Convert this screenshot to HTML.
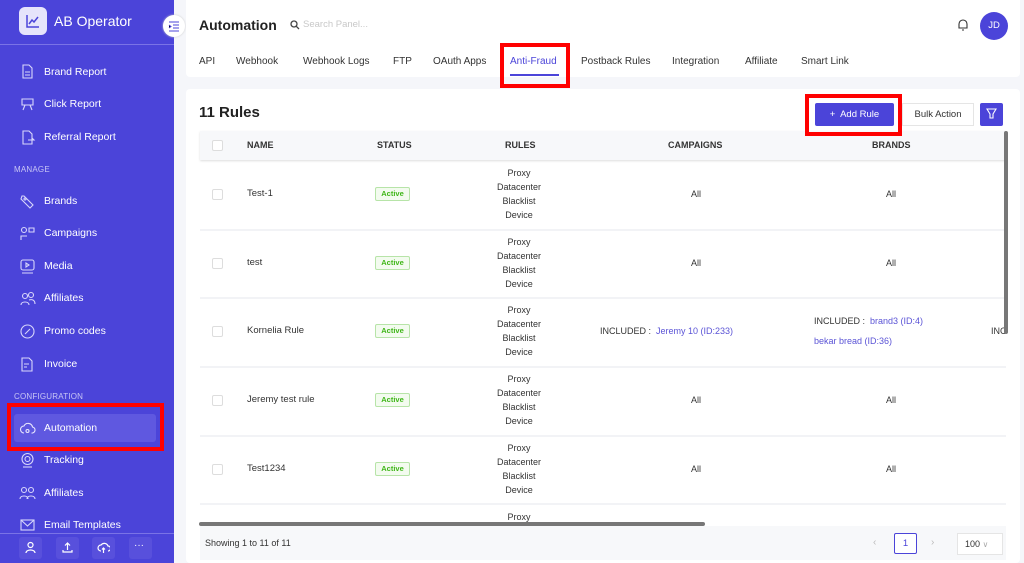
<!DOCTYPE html>
<html><head><meta charset="utf-8"><style>
*{box-sizing:border-box;margin:0;padding:0}
body{width:1024px;height:563px;overflow:hidden;background:#f5f6fa;font-family:"Liberation Sans",sans-serif;position:relative;color:#333}
.a{position:absolute}
#sb{left:0;top:0;width:174px;height:563px;background:#4b44d9;color:#fff}
.it{position:absolute;left:44px;font-size:10.5px;color:#fff}
.ic{position:absolute;left:19px;width:17px;height:17px}
.sec{position:absolute;left:14px;font-size:8px;color:#c9c6f5;letter-spacing:.2px}
.tab{position:absolute;top:56px;font-size:10px;color:#333}
.th{position:absolute;top:140px;font-size:9px;font-weight:bold;color:#333}
.cb{position:absolute;left:212px;width:11px;height:11px;border:1px solid #ddd;border-radius:2px;background:#fff}
.nm{position:absolute;left:247px;font-size:9.5px;color:#333}
.st{position:absolute;left:375px;width:35px;height:14px;border:1px solid #b7e4a8;background:#f3fbef;color:#3fb618;font-size:7.5px;font-weight:bold;text-align:center;line-height:12px;border-radius:2px}
.ru{position:absolute;left:470px;width:98px;text-align:center;font-size:9px;line-height:14px;color:#333}
.al{position:absolute;font-size:9px;color:#333}
.sep{position:absolute;left:200px;width:806px;height:2px;background:#f2f3f6}
.red{position:absolute;border:4px solid #f00}
.lk{color:#5b54d6}
</style></head><body>
<div id="sb" class="a">
 <div class="a" style="left:19px;top:7px;width:28px;height:28px;background:#e6e4fb;border-radius:6px"></div>
 <svg class="a" style="left:25px;top:13px" width="16" height="16" viewBox="0 0 16 16" fill="none" stroke="#4b44d9" stroke-width="1.5"><path d="M2 2v12h12M4 11l3-4 2 2 4-5"/></svg>
 <div class="a" style="left:54px;top:13px;font-size:14px;color:#fff">AB Operator</div>
 <div class="a" style="left:0;top:44px;width:174px;height:1px;background:#7a73e6"></div>
 <svg class="ic" style="top:63px" viewBox="0 0 17 17" fill="none" stroke="#d8d6fb" stroke-width="1.1"><path d="M4 2h6l3 3v10H4z M6 9h5M6 12h5"/></svg><div class="it" style="top:66px">Brand Report</div>
 <svg class="ic" style="top:96px" viewBox="0 0 17 17" fill="none" stroke="#d8d6fb" stroke-width="1.1"><path d="M3 3h11v6H3z M6 9l-2 5M11 9l2 5"/></svg><div class="it" style="top:98px">Click Report</div>
 <svg class="ic" style="top:129px" viewBox="0 0 17 17" fill="none" stroke="#d8d6fb" stroke-width="1.1"><path d="M4 2h6l3 3v10H4z M9 11h6l-2-2"/></svg><div class="it" style="top:131px">Referral Report</div>
 <div class="sec" style="top:165px">MANAGE</div>
 <svg class="ic" style="top:193px" viewBox="0 0 17 17" fill="none" stroke="#d8d6fb" stroke-width="1.1"><path d="M3 3l2 0 9 9-3 3-9-9z"/><circle cx="6" cy="6" r="1"/></svg><div class="it" style="top:195px">Brands</div>
 <svg class="ic" style="top:225px" viewBox="0 0 17 17" fill="none" stroke="#d8d6fb" stroke-width="1.1"><circle cx="5" cy="5" r="2.5"/><path d="M2 15v-4h6M10 3h5v4h-5z"/></svg><div class="it" style="top:227px">Campaigns</div>
 <svg class="ic" style="top:258px" viewBox="0 0 17 17" fill="none" stroke="#d8d6fb" stroke-width="1.1"><rect x="2" y="2" width="13" height="10" rx="2"/><path d="M7 5v4l3-2z M3 15h11"/></svg><div class="it" style="top:260px">Media</div>
 <svg class="ic" style="top:290px" viewBox="0 0 17 17" fill="none" stroke="#d8d6fb" stroke-width="1.1"><circle cx="6" cy="6" r="2.5"/><circle cx="12" cy="5" r="2.5"/><path d="M2 15c0-4 8-4 8 0M10 10c3-1 6 0 6 4"/></svg><div class="it" style="top:292px">Affiliates</div>
 <svg class="ic" style="top:323px" viewBox="0 0 17 17" fill="none" stroke="#d8d6fb" stroke-width="1.1"><circle cx="8.5" cy="8.5" r="6.5"/><path d="M6 11l5-5"/></svg><div class="it" style="top:325px">Promo codes</div>
 <svg class="ic" style="top:356px" viewBox="0 0 17 17" fill="none" stroke="#d8d6fb" stroke-width="1.1"><path d="M3 2h7l3 3v10H3z M5 8h5M5 11h3"/></svg><div class="it" style="top:358px">Invoice</div>
 <div class="sec" style="top:392px">CONFIGURATION</div>
 <div class="a" style="left:14px;top:414px;width:142px;height:28px;background:#5f58e0;border-radius:3px"></div>
 <svg class="ic" style="top:420px" viewBox="0 0 17 17" fill="none" stroke="#e8e6fd" stroke-width="1.1"><path d="M5 13a3.5 3.5 0 010-7 4.5 4.5 0 018.5 1 3 3 0 01-1 6"/><circle cx="8.5" cy="11" r="1.5"/></svg><div class="it" style="top:422px">Automation</div>
 <svg class="ic" style="top:452px" viewBox="0 0 17 17" fill="none" stroke="#d8d6fb" stroke-width="1.1"><circle cx="8.5" cy="7" r="5.5"/><circle cx="8.5" cy="7" r="2.5"/><path d="M4 15h9"/></svg><div class="it" style="top:454px">Tracking</div>
 <svg class="ic" style="top:485px" viewBox="0 0 17 17" fill="none" stroke="#d8d6fb" stroke-width="1.1"><circle cx="5" cy="5" r="2.5"/><circle cx="12" cy="5" r="2.5"/><path d="M1 14c0-4 8-4 8 0M8 14c0-4 8-4 8 0"/></svg><div class="it" style="top:487px">Affiliates</div>
 <svg class="ic" style="top:517px" viewBox="0 0 17 17" fill="none" stroke="#d8d6fb" stroke-width="1.1"><rect x="2" y="3" width="13" height="10"/><path d="M2 3l6.5 6 6.5-6"/></svg><div class="it" style="top:519px">Email Templates</div>
 <div class="a" style="left:0;top:533px;width:174px;height:30px;background:#4b44d9;border-top:1px solid #7a73e6"></div>
 <div class="a" style="left:19px;top:537px;width:23px;height:22px;background:#5850dc;border-radius:3px"></div>
 <div class="a" style="left:56px;top:537px;width:23px;height:22px;background:#5850dc;border-radius:3px"></div>
 <div class="a" style="left:92px;top:537px;width:23px;height:22px;background:#5850dc;border-radius:3px"></div>
 <div class="a" style="left:129px;top:537px;width:23px;height:22px;background:#5850dc;border-radius:3px"></div>
 <svg class="a" style="left:24px;top:541px" width="13" height="13" viewBox="0 0 13 13" fill="none" stroke="#fff" stroke-width="1.2"><circle cx="6.5" cy="4" r="2.5"/><path d="M2 12c0-4 9-4 9 0"/></svg>
 <svg class="a" style="left:61px;top:541px" width="13" height="13" viewBox="0 0 13 13" fill="none" stroke="#fff" stroke-width="1.2"><path d="M6.5 9V2M4 4.5l2.5-2.5 2.5 2.5M2 9v2h9V9"/></svg>
 <svg class="a" style="left:97px;top:541px" width="13" height="13" viewBox="0 0 13 13" fill="none" stroke="#fff" stroke-width="1.2"><path d="M4 10a3 3 0 010-6 4 4 0 017 1 2.5 2.5 0 010 5M6.5 12V7M5 8.5l1.5-1.5 1.5 1.5"/></svg>
 <div class="a" style="left:134px;top:540px;font-size:10px;color:#fff">···</div>
</div>
<div class="a" style="left:163px;top:15px;width:22px;height:22px;border-radius:50%;background:#fff;box-shadow:0 0 2px #ccc"></div>
<svg class="a" style="left:168px;top:20px" width="12" height="12" viewBox="0 0 12 12" stroke="#4b44d9" stroke-width="1"><path d="M1 2h10M5 5h6M5 8h6M1 11h10M1 5l2 1.5-2 1.5"/></svg>

<div class="a" style="left:186px;top:0;width:834px;height:77px;background:#fff;border-radius:0 0 4px 4px"></div>
<div class="a" style="left:199px;top:17px;font-size:14px;font-weight:bold;color:#222">Automation</div>
<svg class="a" style="left:290px;top:20px" width="10" height="10" viewBox="0 0 10 10" fill="none" stroke="#444" stroke-width="1.3"><circle cx="4" cy="4" r="3"/><path d="M6.3 6.3L9 9"/></svg>
<div class="a" style="left:303px;top:19px;font-size:9.5px;color:#c8c8c8">Search Panel...</div>
<svg class="a" style="left:957px;top:18px" width="12" height="13" viewBox="0 0 12 13" fill="none" stroke="#333" stroke-width="1.1"><path d="M2 10V6a4 4 0 018 0v4H2zM5 12h2"/></svg>
<div class="a" style="left:980px;top:12px;width:28px;height:28px;border-radius:50%;background:#4b44d9;color:#fff;font-size:9.5px;text-align:center;line-height:28px">JD</div>
<div class="tab" style="left:199px">API</div>
<div class="tab" style="left:236px">Webhook</div>
<div class="tab" style="left:303px">Webhook Logs</div>
<div class="tab" style="left:393px">FTP</div>
<div class="tab" style="left:433px">OAuth Apps</div>
<div class="tab" style="left:510px;color:#4b44d9">Anti-Fraud</div>
<div class="a" style="left:510px;top:74px;width:49px;height:1.5px;background:#4b44d9"></div>
<div class="tab" style="left:581px">Postback Rules</div>
<div class="tab" style="left:672px">Integration</div>
<div class="tab" style="left:745px">Affiliate</div>
<div class="tab" style="left:801px">Smart Link</div>

<div class="a" style="left:186px;top:89px;width:834px;height:474px;background:#fff;border-radius:4px"></div>
<div class="a" style="left:199px;top:104px;font-size:15px;font-weight:bold;color:#222">11 Rules</div>
<div class="a" style="left:815px;top:103px;width:79px;height:23px;background:#4b44d9;color:#fff;font-size:9.5px;text-align:center;line-height:23px;border-radius:2px">+&nbsp; Add Rule</div>
<div class="a" style="left:902px;top:103px;width:72px;height:23px;border:1px solid #e5e5e5;font-size:9.5px;text-align:center;line-height:21px;color:#333">Bulk Action</div>
<div class="a" style="left:980px;top:103px;width:23px;height:23px;background:#4b44d9;border-radius:2px"></div>
<svg class="a" style="left:986px;top:108px" width="11" height="11" viewBox="0 0 11 11" fill="none" stroke="#fff" stroke-width="1.1"><path d="M1 1h9L7 6v4H4V6z"/></svg>

<div class="a" style="left:200px;top:131px;width:806px;height:29px;background:#f7f8fa;box-shadow:0 1px 2px #ddd"></div>
<div class="cb" style="top:140px"></div>
<div class="th" style="left:247px">NAME</div>
<div class="th" style="left:377px">STATUS</div>
<div class="th" style="left:505px">RULES</div>
<div class="th" style="left:668px">CAMPAIGNS</div>
<div class="th" style="left:872px">BRANDS</div>

<div class="sep" style="top:229px"></div><div class="sep" style="top:297px"></div><div class="sep" style="top:366px"></div><div class="sep" style="top:435px"></div><div class="sep" style="top:503px"></div>

<div class="cb" style="top:189px"></div><div class="nm" style="top:188px">Test-1</div><div class="st" style="top:187px">Active</div>
<div class="ru" style="top:166px">Proxy<br>Datacenter<br>Blacklist<br>Device</div><div class="al" style="left:691px;top:189px">All</div><div class="al" style="left:886px;top:189px">All</div>
<div class="cb" style="top:258px"></div><div class="nm" style="top:257px">test</div><div class="st" style="top:256px">Active</div>
<div class="ru" style="top:235px">Proxy<br>Datacenter<br>Blacklist<br>Device</div><div class="al" style="left:691px;top:258px">All</div><div class="al" style="left:886px;top:258px">All</div>
<div class="cb" style="top:326px"></div><div class="nm" style="top:325px">Kornelia Rule</div><div class="st" style="top:324px">Active</div>
<div class="ru" style="top:303px">Proxy<br>Datacenter<br>Blacklist<br>Device</div>
<div class="al" style="left:600px;top:326px">INCLUDED : &nbsp;<span class="lk">Jeremy 10 (ID:233)</span></div>
<div class="al" style="left:814px;top:316px">INCLUDED : &nbsp;<span class="lk">brand3 (ID:4)</span></div>
<div class="al" style="left:814px;top:336px"><span class="lk">bekar bread (ID:36)</span></div>
<div class="al" style="left:991px;top:326px">INC</div>
<div class="cb" style="top:395px"></div><div class="nm" style="top:394px">Jeremy test rule</div><div class="st" style="top:393px">Active</div>
<div class="ru" style="top:372px">Proxy<br>Datacenter<br>Blacklist<br>Device</div><div class="al" style="left:691px;top:395px">All</div><div class="al" style="left:886px;top:395px">All</div>
<div class="cb" style="top:464px"></div><div class="nm" style="top:463px">Test1234</div><div class="st" style="top:462px">Active</div>
<div class="ru" style="top:441px">Proxy<br>Datacenter<br>Blacklist<br>Device</div><div class="al" style="left:691px;top:464px">All</div><div class="al" style="left:886px;top:464px">All</div>
<div class="ru" style="top:510px">Proxy</div>

<div class="a" style="left:1004px;top:131px;width:4px;height:203px;background:#777;border-radius:2px"></div>
<div class="a" style="left:200px;top:526px;width:806px;height:34px;background:#f7f8fa"></div>
<div class="a" style="left:199px;top:522px;width:506px;height:4px;background:#777;border-radius:2px"></div>
<div class="a" style="left:205px;top:538px;font-size:9px;color:#333">Showing 1 to 11 of 11</div>
<div class="a" style="left:873px;top:537px;font-size:10px;color:#bbb">‹</div>
<div class="a" style="left:894px;top:533px;width:23px;height:21px;border:1px solid #4b44d9;background:#fff;font-size:9.5px;text-align:center;line-height:19px;color:#4b44d9;border-radius:2px">1</div>
<div class="a" style="left:931px;top:537px;font-size:10px;color:#bbb">›</div>
<div class="a" style="left:957px;top:533px;width:46px;height:22px;border:1px solid #e5e5e5;background:#fff;font-size:9px;line-height:20px;padding-left:7px;color:#333">100 <span style="color:#aaa;font-size:8px">∨</span></div>

<div class="red" style="left:500px;top:43px;width:70px;height:45px"></div>
<div class="red" style="left:805px;top:94px;width:97px;height:42px"></div>
<div class="red" style="left:7px;top:403px;width:157px;height:48px"></div>
</body></html>
